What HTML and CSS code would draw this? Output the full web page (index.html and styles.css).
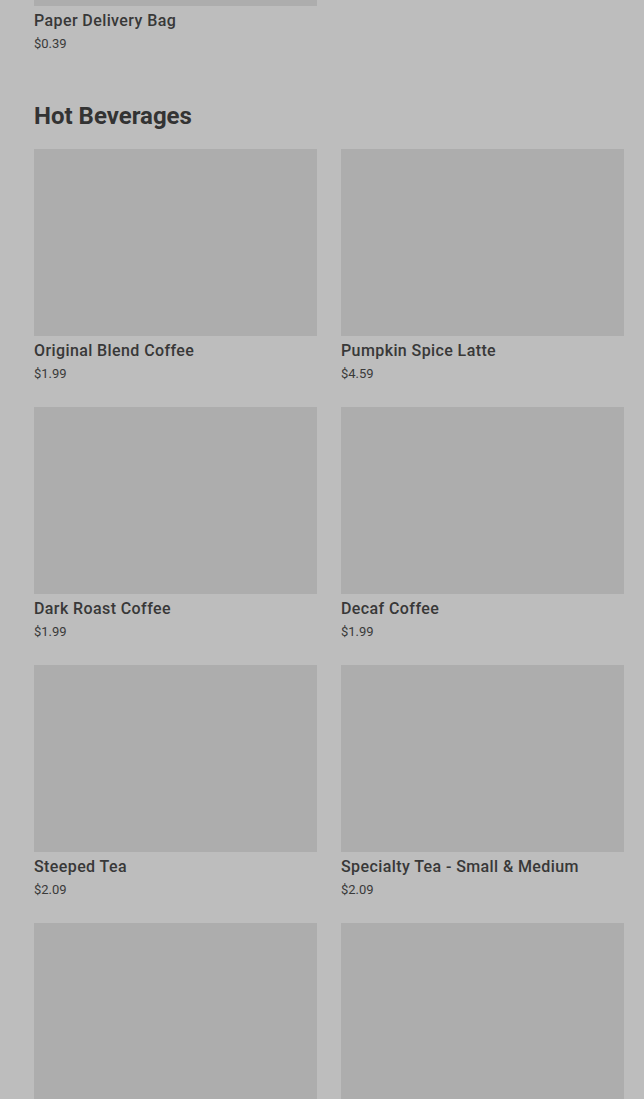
FILE: index.html
```html
<!DOCTYPE html>
<html lang="en">

<head>
    <meta charset="UTF-8">
    <meta name="viewport" content="width=device-width, initial-scale=1.0">
    <title>Menu</title>
    <link rel="stylesheet" href="styles.css">
</head>

<body>
    <div class="menu">
        <div class="section section-cut">
            <div class="grid">
                <div class="item">
                    <div class="thumb thumb-cut"></div>
                    <div class="name">Paper Delivery Bag</div>
                    <div class="price">$0.39</div>
                </div>
            </div>
        </div>

        <div class="section">
            <h2>Hot Beverages</h2>
            <div class="grid">
                <div class="item">
                    <div class="thumb"></div>
                    <div class="name">Original Blend Coffee</div>
                    <div class="price">$1.99</div>
                </div>
                <div class="item">
                    <div class="thumb"></div>
                    <div class="name">Pumpkin Spice Latte</div>
                    <div class="price">$4.59</div>
                </div>
                <div class="item">
                    <div class="thumb"></div>
                    <div class="name">Dark Roast Coffee</div>
                    <div class="price">$1.99</div>
                </div>
                <div class="item">
                    <div class="thumb"></div>
                    <div class="name">Decaf Coffee</div>
                    <div class="price">$1.99</div>
                </div>
                <div class="item">
                    <div class="thumb"></div>
                    <div class="name">Steeped Tea</div>
                    <div class="price">$2.09</div>
                </div>
                <div class="item">
                    <div class="thumb"></div>
                    <div class="name">Specialty Tea - Small &amp; Medium</div>
                    <div class="price">$2.09</div>
                </div>
                <div class="item">
                    <div class="thumb"></div>
                </div>
                <div class="item">
                    <div class="thumb"></div>
                </div>
            </div>
        </div>
    </div>
</body>

</html>
```

FILE: styles.css
```css
body {
    font-family: Roboto, "Liberation Sans", sans-serif;
    background-color: #bdbdbd;
    color: #333;
    margin: 0;
    padding: 0;
    overflow: hidden;
}

.menu {
    padding: 0 20px 0 34px;
}

.section {
    margin-bottom: 46px;
}

.section h2 {
    margin: 0 0 17px 0;
    font-size: 24px;
    line-height: 32px;
    font-weight: 700;
    color: #333;
}

.grid {
    display: grid;
    grid-template-columns: 1fr 1fr;
    gap: 23px 24px;
}

.thumb {
    height: 187px;
    background-color: #adadad;
}

/* the section above is scrolled off, only its last few px show */
.thumb-cut {
    height: 6px;
}

.name {
    margin-top: 5px;
    font-size: 16px;
    line-height: 20px;
    font-weight: 500;
    letter-spacing: 0.4px;
    color: #383838;
    white-space: nowrap;
}

.price {
    margin-top: 3px;
    font-size: 13px;
    line-height: 20px;
    color: #3a3a3a;
}
```
